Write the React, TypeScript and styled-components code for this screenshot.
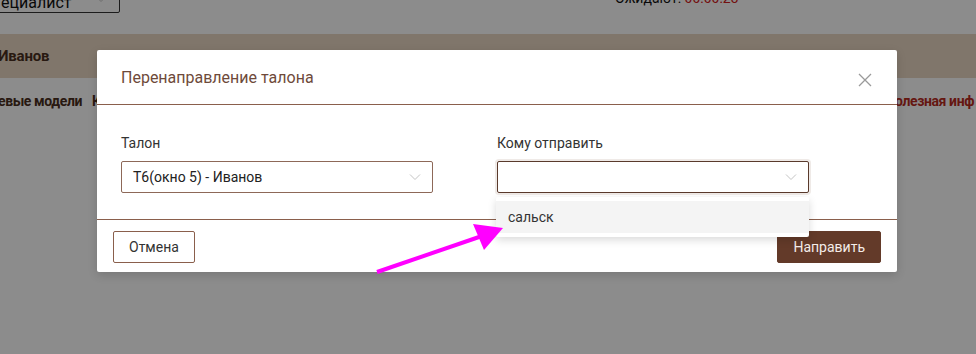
import styled, { createGlobalStyle } from "styled-components";

const GlobalStyle = createGlobalStyle`
  html, body {
    margin: 0;
    padding: 0;
    background: #ffffff;
    overflow: hidden;
  }
  body {
    font-family: Roboto, "Liberation Sans", sans-serif;
  }
`;

const Page = styled.div`
  position: relative;
  width: 976px;
  height: 354px;
  overflow: hidden;
  background: #ffffff;
`;

const TopBar = styled.div`
  height: 34px;
  display: flex;
  align-items: flex-start;
`;

const RoleSelect = styled.div`
  margin-top: -20px;
  margin-left: -20px;
  width: 140px;
  height: 33px;
  border: 1px solid #333;
  border-radius: 2px;
  display: flex;
  align-items: flex-end;
  justify-content: space-between;
  padding: 0 12px 0 20px;
  box-sizing: border-box;
  font-size: 16px;
  color: #111;

  svg {
    margin-bottom: 9px;
  }
`;

const Waiting = styled.div`
  margin-top: -10px;
  margin-left: 495px;
  font-size: 14px;
  color: #111;

  span {
    color: #d32020;
  }
`;

const UserBand = styled.div`
  height: 44px;
  background: #e9d8c4;
  display: flex;
  align-items: center;
  margin-left: -2px;
  font-family: Roboto, "Liberation Sans", sans-serif;
  font-weight: bold;
  font-size: 15px;
  letter-spacing: -0.2px;
  color: #4a2e20;
`;

const NavRow = styled.div`
  height: 46px;
  display: flex;
  align-items: center;
  font-family: Roboto, "Liberation Sans", sans-serif;
  font-weight: bold;
  font-size: 14px;
  letter-spacing: -0.4px;
  margin-left: -2px;
  white-space: nowrap;
`;

const NavItem = styled.span<{ $red?: boolean }>`
  margin-right: ${(p) => (p.$red ? "2px" : "10px")};
  color: ${(p) => (p.$red ? "#b82a1e" : "#4a2e20")};
`;

const NavSpacer = styled.div`
  flex: 1;
`;

const Overlay = styled.div`
  position: absolute;
  inset: 0;
  background: rgba(0, 0, 0, 0.45);
`;

const Modal = styled.div`
  position: absolute;
  left: 97px;
  top: 50px;
  width: 800px;
  background: #ffffff;
  border-radius: 2px;
  box-shadow: 0 3px 10px rgba(0, 0, 0, 0.15);
`;

const ModalHeader = styled.div`
  height: 54px;
  border-bottom: 1px solid #8a5f4c;
  display: flex;
  align-items: center;
  justify-content: space-between;
  padding: 0 20px 0 24px;
`;

const Title = styled.div`
  font-size: 16px;
  color: #6e4a3a;
`;

const CloseButton = styled.button`
  width: 24px;
  height: 24px;
  border: none;
  background: none;
  padding: 0;
  display: flex;
  align-items: center;
  justify-content: center;
  margin-top: 6px;
`;

const ModalBody = styled.div`
  height: 114px;
  padding: 30px 24px 0 24px;
  box-sizing: border-box;
  display: grid;
  grid-template-columns: 312px 312px;
  column-gap: 64px;
`;

const Field = styled.div`
  position: relative;
  display: flex;
  flex-direction: column;
`;

const Label = styled.label`
  font-size: 14px;
  color: #333;
  height: 17px;
  margin-bottom: 9px;
`;

const SelectBox = styled.div<{ $focused?: boolean }>`
  height: 32px;
  box-sizing: border-box;
  border: 1px solid ${(p) => (p.$focused ? "#5a3a2c" : "#8d6858")};
  border-radius: 2px;
  box-shadow: ${(p) => (p.$focused ? "0 0 0 2px rgba(120, 80, 60, 0.12)" : "none")};
  display: flex;
  align-items: center;
  justify-content: space-between;
  padding: 0 11px;
  font-size: 14px;
  color: #222;
  background: #ffffff;
`;

const Menu = styled.div`
  position: absolute;
  left: -1px;
  top: 62px;
  width: 313px;
  background: #ffffff;
  padding: 4px 0;
  border-radius: 2px;
  box-shadow: 0 3px 8px rgba(0, 0, 0, 0.15);
  z-index: 2;
`;

const Option = styled.div<{ $active?: boolean }>`
  height: 32px;
  display: flex;
  align-items: center;
  padding: 0 12px;
  font-size: 14px;
  color: #333;
  background: ${(p) => (p.$active ? "#f4f4f4" : "#ffffff")};
`;

const ModalFooter = styled.div`
  border-top: 1px solid #8a5f4c;
  height: 52px;
  display: flex;
  align-items: center;
  justify-content: space-between;
  padding: 0 16px;
`;

const Button = styled.button<{ $primary?: boolean }>`
  height: 32px;
  padding: 0 15px;
  font-family: Roboto, "Liberation Sans", sans-serif;
  font-size: 14px;
  border-radius: 2px;
  border: 1px solid ${(p) => (p.$primary ? "#633a29" : "#8a5f4c")};
  background: ${(p) => (p.$primary ? "#633a29" : "#ffffff")};
  color: ${(p) => (p.$primary ? "#f4ece8" : "#333")};
  margin-top: 1px;
`;

const Annotation = styled.svg`
  position: absolute;
  left: 370px;
  top: 220px;
  z-index: 3;
`;

const Chevron = () => (
  <svg width="12" height="8" viewBox="0 0 12 8">
    <path d="M1 1.5 L6 6.5 L11 1.5" fill="none" stroke="#c4c4c4" strokeWidth="1" />
  </svg>
);

export default function App() {
  return (
    <Page>
      <GlobalStyle />
      <TopBar>
        <RoleSelect>
          <span>ециалист</span>
          <Chevron />
        </RoleSelect>
        <Waiting>
          Ожидают: <span>00:00:23</span>
        </Waiting>
      </TopBar>
      <UserBand>Иванов</UserBand>
      <NavRow>
        <NavItem>евые модели</NavItem>
        <NavItem>К</NavItem>
        <NavSpacer />
        <NavItem $red>олезная инф</NavItem>
      </NavRow>

      <Overlay />

      <Modal>
        <ModalHeader>
          <Title>Перенаправление талона</Title>
          <CloseButton aria-label="Закрыть">
            <svg width="14" height="14" viewBox="0 0 14 14">
              <path d="M1 1 L13 13 M13 1 L1 13" stroke="#9a9a9a" strokeWidth="1.3" />
            </svg>
          </CloseButton>
        </ModalHeader>
        <ModalBody>
          <Field>
            <Label>Талон</Label>
            <SelectBox>
              <span>Т6(окно 5) - Иванов</span>
              <Chevron />
            </SelectBox>
          </Field>
          <Field>
            <Label>Кому отправить</Label>
            <SelectBox $focused>
              <span />
              <Chevron />
            </SelectBox>
            <Menu>
              <Option $active>сальск</Option>
            </Menu>
          </Field>
        </ModalBody>
        <ModalFooter>
          <Button>Отмена</Button>
          <Button $primary>Направить</Button>
        </ModalFooter>
      </Modal>

      <Annotation width="140" height="60" viewBox="0 0 140 60">
        <line x1="7" y1="52" x2="112" y2="16" stroke="#ff00ff" strokeWidth="4" />
        <polygon points="133,8 103,4 114,30" fill="#ff00ff" />
      </Annotation>
    </Page>
  );
}
